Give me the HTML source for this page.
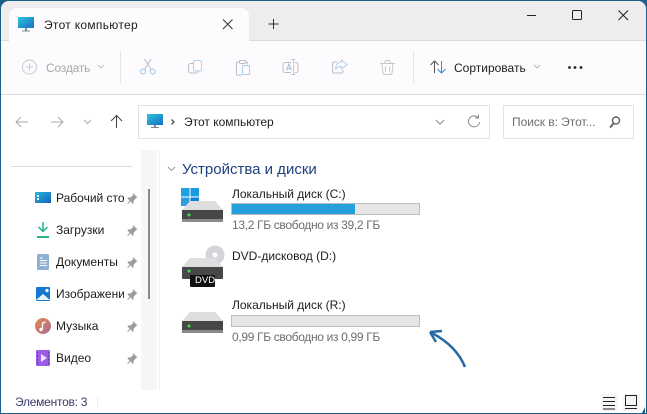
<!DOCTYPE html>
<html lang="ru"><head><meta charset="utf-8"><title>Этот компьютер</title>
<style>
html,body{margin:0;padding:0}
body{width:647px;height:414px;position:relative;overflow:hidden;background:#1d5f8a;font-family:"Liberation Sans",sans-serif;font-size:12px;color:#1c1c1c}
#w{position:absolute;left:1px;top:1px;width:645px;height:412px;background:#fff;border-radius:8px 8px 0 0;overflow:hidden}
.a{position:absolute;white-space:nowrap;line-height:16px}
svg{position:absolute;overflow:visible}
.bar{position:absolute;left:231px;width:187px;height:10px;background:#e6e6e6;border:1px solid #bcbcbc}
.g{color:#6d6d6d;letter-spacing:-.33px}
</style></head><body>
<div id="w" style="left:1px;top:1px">
<div style="position:absolute;left:0;top:0;width:645px;height:39px;background:#eeecef;border-bottom:1px solid #dcdcdc"></div>
<div style="position:absolute;left:8px;top:7px;width:240px;height:33px;background:#fdfbfe;border-radius:8px 8px 0 0"></div>
<div style="position:absolute;left:0;top:40px;width:645px;height:53px;background:#fdfbfe;border-bottom:1px solid #dcdcdc"></div>
</div>
<svg width="647" height="414" style="left:0;top:0">
<defs><linearGradient id="m" x1="0" y1="0" x2="1" y2="1"><stop offset="0" stop-color="#2cc4dc"/><stop offset="1" stop-color="#1a6fc0"/></linearGradient></defs>
<!-- tab icon -->
<rect x="18" y="17" width="16" height="11" fill="url(#m)"/><rect x="25" y="28" width="2" height="2.500" fill="#7a8a95"/><rect x="22" y="30.500" width="8" height="1" fill="#7a8a95"/>
<path d="M223 19.500l9.500 9.500M232.500 19.500l-9.500 9.500" stroke="#333" fill="none"/>
<path d="M273.500 19v10M268.500 24h10" stroke="#333" fill="none"/>
<path d="M527 15.500h9" stroke="#222" fill="none"/><rect x="572.500" y="10.500" width="9" height="9" rx="1" fill="none" stroke="#222"/>
<path d="M618.500 10.500l9.500 9.500M628 10.500l-9.500 9.500" stroke="#222" fill="none"/>
<!-- new -->
<circle cx="29.500" cy="67" r="7" fill="none" stroke="#c9c9cc"/><path d="M29.500 63.500v7M26 67h7" stroke="#b8d4ec" fill="none"/>
<path d="M98 65l3 3 3-3" stroke="#c4c4c4" fill="none"/>
<rect x="120" y="51" width="1" height="32" fill="#e6e5e8"/>
<!-- cut -->
<g fill="none" stroke="#a9cfee" stroke-width="1.200"><circle cx="143" cy="71.500" r="2.500"/><circle cx="152.500" cy="71.500" r="2.500"/></g><path d="M144.500 69.500l6.500-10.500M151 69.500l-6.500-10.500" stroke="#bdbdc1" fill="none"/>
<!-- copy -->
<rect x="193.500" y="60.500" width="8" height="10.500" rx="2" fill="none" stroke="#a9cfee"/><path d="M193 63.500h-2a2.500 2.500 0 0 0-2.500 2.500v4.500a2.500 2.500 0 0 0 2.500 2.500h5a2 2 0 0 0 2-2" fill="none" stroke="#bdbdc1"/>
<!-- paste -->
<path d="M239 62h-1a1.500 1.500 0 0 0-1.500 1.500v10a1.500 1.500 0 0 0 1.500 1.500h4M246 62h.500a1 1 0 0 1 1 1v1.500" fill="none" stroke="#bdbdc1"/><rect x="239.500" y="60.500" width="6" height="3" rx="1" fill="none" stroke="#bdbdc1"/><rect x="242.500" y="65.500" width="7" height="9" rx="1" fill="none" stroke="#a9cfee"/>
<!-- rename -->
<path d="M291 62.500h-6a2 2 0 0 0-2 2v6a2 2 0 0 0 2 2h6M295 62.500h1a2 2 0 0 1 2 2v6a2 2 0 0 1-2 2h-1" fill="none" stroke="#bdbdc1"/><path d="M286.500 70.500l2.500-6.500 2.500 6.500M287.500 68.500h3" fill="none" stroke="#9db9d6"/><path d="M293.500 60v14M291.500 59.500h4M291.500 74.500h4" fill="none" stroke="#a9cfee"/>
<!-- share -->
<path d="M343 70v1.500a1.500 1.500 0 0 1-1.500 1.500h-7.500a1.500 1.500 0 0 1-1.500-1.500v-8a1.500 1.500 0 0 1 1.500-1.500h3" fill="none" stroke="#bdbdc1"/><path d="M341.500 60l5.500 4.500-5.500 4.500v-2.500c-3 0-5 1-6 3 0-4 2-7.500 6-7.500z" fill="none" stroke="#a9cfee"/>
<!-- trash -->
<path d="M380 63.500h15M384.500 63l1-2.500h4l1 2.500M382 63.500l1 9.500a1.500 1.500 0 0 0 1.500 1.500h6a1.500 1.500 0 0 0 1.500-1.500l1-9.500M385.500 66.500v5M389.500 66.500v5" fill="none" stroke="#c8c8cb"/>
<rect x="413" y="51" width="1" height="32" fill="#e6e5e8"/>
<!-- sort -->
<path d="M434.500 73V61M430.500 65l4-4 4 4" fill="none" stroke="#555"/><path d="M441.500 61v12M437.500 69l4 4 4-4" fill="none" stroke="#2b8be0"/>
<path d="M534 65l3 3 3-3" stroke="#b5b5b5" fill="none"/>
<g fill="#222"><circle cx="569.500" cy="67.500" r="1.400"/><circle cx="575" cy="67.500" r="1.400"/><circle cx="581" cy="67.500" r="1.400"/></g>
<!-- nav -->
<path d="M16 122h12M21 117l-5 5 5 5" fill="none" stroke="#aaa"/>
<path d="M51 122h12M58 117l5 5-5 5" fill="none" stroke="#aaa"/>
<path d="M84 120l3.500 3.500L91 120" fill="none" stroke="#aaa"/>
<path d="M116.500 128v-12M111 121l5.500-5.500 5.500 5.500" fill="none" stroke="#444"/>
<rect x="138.500" y="105.500" width="351" height="33" fill="#fff" stroke="#e2e2e2"/>
<rect x="503.500" y="105.500" width="130" height="33" fill="#fff" stroke="#e2e2e2"/>
<rect x="147" y="114" width="16" height="11" fill="url(#m)"/><rect x="154" y="125" width="2" height="2" fill="#7a8a95"/><rect x="151" y="127" width="8" height="1" fill="#7a8a95"/>
<path d="M171.500 119.500l2.500 2.500-2.500 2.500" fill="none" stroke="#555" stroke-width="1.300"/>
<path d="M436 120l4 4 4-4" fill="none" stroke="#8a8a8a"/>
<path d="M478 117.500a5.500 5.500 0 1 0 1.500 4.500M478.500 114.500v3.500h-3.500" fill="none" stroke="#8a8a8a"/>
<circle cx="616" cy="120.500" r="3.500" fill="none" stroke="#666" stroke-width="1.500"/><path d="M613.500 123.500l-3.500 4" stroke="#666" stroke-width="2" fill="none"/>
<!-- sidebar -->
<rect x="11" y="166" width="121" height="1" fill="#dcdcdc"/>
<rect x="141" y="150" width="16" height="240" fill="#f6f6f6"/><rect x="159" y="150" width="1" height="240" fill="#f0f0f0"/>
<rect x="148" y="189" width="2" height="110" fill="#8a8a8a"/>
<!-- side icons -->
<defs>
<linearGradient id="d1" x1="0" y1="0" x2="1" y2="1"><stop offset="0" stop-color="#27b5e0"/><stop offset="1" stop-color="#1763b5"/></linearGradient>
<linearGradient id="mu" x1="0" y1="0" x2="1" y2="1"><stop offset="0" stop-color="#e8884a"/><stop offset="1" stop-color="#a86a90"/></linearGradient></defs>
<rect x="35" y="192" width="16" height="11" fill="url(#d1)"/><rect x="37" y="195" width="2" height="2" fill="#dff"/><rect x="37" y="198" width="2" height="2" fill="#dff"/>
<path d="M43 222v9M38.500 227l4.500 4.500 4.500-4.500" fill="none" stroke="#1fb58e" stroke-width="1.500"/><rect x="37" y="236" width="12" height="2" fill="#1fb58e"/>
<rect x="37" y="254" width="12" height="16" rx="1" fill="#8fb0d6"/><path d="M40 258h3M40 260.500h7M40 263h7M40 265.500h7" stroke="#fff" fill="none"/>
<rect x="36" y="287" width="14" height="14" rx="1" fill="#1578cf"/><path d="M36 300l7-6 7 6z" fill="#e9f3fb"/><circle cx="47" cy="290.500" r="1.600" fill="#fff"/>
<circle cx="43" cy="326" r="8" fill="url(#mu)"/><path d="M42.500 329v-6l3-1" fill="none" stroke="#fff" stroke-width="1.300"/><circle cx="41" cy="329.500" r="1.700" fill="#fff"/>
<rect x="36" y="350" width="14" height="16" rx="1" fill="#9a5ce6"/><path d="M41 354l6 4-6 4z" fill="#f0e4ff"/><path d="M37.500 352v13M48.500 352v13" stroke="#5a2e9c" stroke-dasharray="1.500 2" fill="none"/>
<!-- pins -->
<defs><path id="pin" d="M133 193l4.500 4.500-1.500.5-2.500 3 .2 2-1 .7-2.400-2.400-2.300 2.700-.8-.8 2.500-2.500-2.300-2.300.7-1 2 .2 3-2.500z"/></defs>
<g fill="#9c9c9c"><use href="#pin"/><use href="#pin" y="32"/><use href="#pin" y="64"/><use href="#pin" y="96"/><use href="#pin" y="128"/><use href="#pin" y="160"/></g>
<!-- group -->
<path d="M168 167l3.500 3.500 3.500-3.500" fill="none" stroke="#999"/>
<!-- disks -->
<g>
<rect x="181" y="188" width="8.500" height="8.500" fill="#1fa0e2"/><rect x="190.500" y="188" width="8.500" height="8.500" fill="#1c9ae0"/><rect x="181" y="197.500" width="8.500" height="8.500" fill="#2a9fe0"/><rect x="190.500" y="197.500" width="8.500" height="8.500" fill="#0f7fd4"/>
<path d="M190 201h25l8 9H182z" fill="#dedede"/><path d="M182 210h41v11a1 1 0 0 1-1 1h-39a1 1 0 0 1-1-1z" fill="#474745"/><rect x="182" y="219" width="41" height="3" fill="#8a8a88"/><circle cx="189" cy="215" r="1.500" fill="#3fe04a"/>
</g>
<g>
<circle cx="215" cy="255" r="9.500" fill="#d4d4da"/><circle cx="215" cy="255" r="2.500" fill="#fff"/>
<path d="M190 258h25l8 9H182z" fill="#dedede"/><path d="M182 267h41v11a1 1 0 0 1-1 1h-39a1 1 0 0 1-1-1z" fill="#474745"/><circle cx="189" cy="271" r="1.500" fill="#3fe04a"/>
<rect x="190" y="275" width="25" height="12" rx="1" fill="#111"/>
</g>
<g>
<path d="M190 312h25l8 9H182z" fill="#dedede"/><path d="M182 321h41v11a1 1 0 0 1-1 1h-39a1 1 0 0 1-1-1z" fill="#474745"/><rect x="182" y="330" width="41" height="3" fill="#8a8a88"/><circle cx="189" cy="326" r="1.500" fill="#3fe04a"/>
</g>
<!-- arrow -->
<path d="M465 367C459 352 447 341 432 333" fill="none" stroke="#2a6aa0" stroke-width="2.500"/><path d="M430 332l12-1M430 332l6 10" fill="none" stroke="#2a6aa0" stroke-width="2.500"/>
<!-- status -->
<rect x="97" y="396" width="1" height="11" fill="#eee"/>
<rect x="601" y="394" width="17" height="17" rx="2" fill="#f5f5f5"/><rect x="623" y="394" width="17" height="17" rx="2" fill="#f5f5f5"/>
<path d="M603 397.500h12M603 401.500h12M603 405.500h12M603 409h12" stroke="#222" fill="none"/>
<rect x="625.500" y="395.500" width="11" height="10" fill="none" stroke="#222"/><path d="M625 408.500h12" stroke="#222" fill="none"/>
<path d="M645 413v-6l-3 6z" fill="#1d5f8a"/>
</svg>
<div class="a" style="left:44px;top:17px;letter-spacing:.3px">Этот компьютер</div>
<div class="a" style="left:46px;top:60px;color:#a8a8a8;letter-spacing:-.2px">Создать</div>
<div class="a" style="left:454px;top:60px">Сортировать</div>
<div class="a" style="left:184px;top:114px">Этот компьютер</div>
<div class="a" style="left:512px;top:114px;color:#6e6e6e;letter-spacing:-.05px">Поиск в: Этот...</div>
<div class="a" style="left:56px;top:190px;width:68px;overflow:hidden">Рабочий стол</div>
<div class="a" style="left:56px;top:222px;width:68px;overflow:hidden">Загрузки</div>
<div class="a" style="left:56px;top:254px;width:68px;overflow:hidden">Документы</div>
<div class="a" style="left:56px;top:286px;width:68px;overflow:hidden">Изображения</div>
<div class="a" style="left:56px;top:318px;width:68px;overflow:hidden">Музыка</div>
<div class="a" style="left:56px;top:350px;width:68px;overflow:hidden">Видео</div>
<div class="a" style="left:15px;top:394px;color:#3a3a6a;letter-spacing:-.25px">Элементов: 3</div>
<div class="a" style="left:182px;top:161px;font-size:15px;line-height:18px;color:#1f3f80">Устройства и диски</div>
<div class="a" style="left:232px;top:186px">Локальный диск (C:)</div>
<div class="bar" style="top:203px"><div style="width:123px;height:10px;background:#26a0da"></div></div>
<div class="a g" style="left:232px;top:217px">13,2 ГБ свободно из 39,2 ГБ</div>
<div class="a" style="left:232px;top:248px">DVD-дисковод (D:)</div>
<div class="a" style="left:195px;top:273px;font-size:9.500px;color:#fff">DVD</div>
<div class="a" style="left:232px;top:297px">Локальный диск (R:)</div>
<div class="bar" style="top:315px"></div>
<div class="a g" style="left:232px;top:329px">0,99 ГБ свободно из 0,99 ГБ</div>
</body></html>
